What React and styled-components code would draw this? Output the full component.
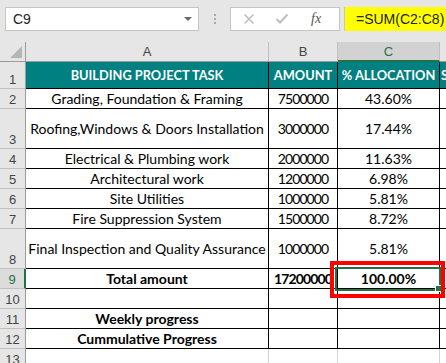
import React from "react";
import styled, { createGlobalStyle } from "styled-components";

const GlobalStyle = createGlobalStyle`
  html, body { margin: 0; padding: 0; background: #ffffff; overflow: hidden; }
  body { font-family: Lato, "Noto Sans", sans-serif; }
`;

const rows = [
  { n: 1, h: 27, head: true, a: "BUILDING PROJECT TASK", b: "AMOUNT", c: "% ALLOCATION", d: "S" },
  { n: 2, h: 20, a: "Grading, Foundation & Framing", b: "7500000", c: "43.60%" },
  { n: 3, h: 40, a: "Roofing,Windows & Doors Installation", b: "3000000", c: "17.44%" },
  { n: 4, h: 20, a: "Electrical & Plumbing work", b: "2000000", c: "11.63%" },
  { n: 5, h: 20, a: "Architectural work", b: "1200000", c: "6.98%" },
  { n: 6, h: 20, a: "Site Utilities", b: "1000000", c: "5.81%" },
  { n: 7, h: 20, a: "Fire Suppression System", b: "1500000", c: "8.72%" },
  { n: 8, h: 40, a: "Final Inspection and Quality Assurance", b: "1000000", c: "5.81%" },
  { n: 9, h: 20, bold: true, a: "Total amount", b: "17200000", c: "100.00%", selected: true },
  { n: 10, h: 20, a: "", b: "", c: "" },
  { n: 11, h: 20, bold: true, a: "Weekly progress", b: "", c: "" },
  { n: 12, h: 20, bold: true, a: "Cummulative Progress", b: "", c: "" },
];

const Page = styled.div`
  width: 446px;
  height: 363px;
  overflow: hidden;
  background: #e6e6e6;
`;

const FormulaBar = styled.div`
  height: 42px;
  display: flex;
  align-items: flex-start;
  padding-top: 7px;
  box-sizing: border-box;
`;

const NameBox = styled.div`
  margin-left: 5px;
  width: 194px;
  height: 24px;
  box-sizing: border-box;
  background: #fff;
  border: 1px solid #c6c6c6;
  display: flex;
  align-items: center;
  justify-content: space-between;
  padding: 0 6px 0 7px;
  font-family: "Liberation Sans", Arial, sans-serif;
  font-size: 14px;
  color: #222;
`;

const Caret = styled.span`
  width: 0;
  height: 0;
  border-left: 4px solid transparent;
  border-right: 4px solid transparent;
  border-top: 4px solid #6a6a6a;
`;

const Dots = styled.div`
  width: 31px;
  height: 24px;
  display: flex;
  flex-direction: column;
  align-items: center;
  justify-content: center;
  gap: 2px;
  & > span { width: 2px; height: 2px; background: #a8a8a8; }
`;

const IconBox = styled.div`
  width: 110px;
  height: 24px;
  box-sizing: border-box;
  background: #fff;
  border: 1px solid #c6c6c6;
  display: flex;
  align-items: center;
  padding-left: 12px;
  gap: 20px;
`;

const Fx = styled.span`
  font-family: "Liberation Serif", serif;
  font-style: italic;
  font-size: 14px;
  color: #555;
  margin-left: 2px;
`;

const FormulaInput = styled.div`
  margin-left: 4px;
  flex: 1;
  height: 24px;
  box-sizing: border-box;
  background: #ffff00;
  border-left: 1px solid #c6c6c6;
  display: flex;
  align-items: center;
  padding-left: 11px;
  font-family: "Liberation Sans", Arial, sans-serif;
  font-size: 14px;
  color: #222;
`;

const Sheet = styled.div`
  display: grid;
  grid-template-columns: 26px 243px 69px 102px 1fr;
  background: #fff;
`;

const ColHead = styled.div`
  height: 20px;
  box-sizing: border-box;
  background: ${(p) => (p.$active ? "#d2d2d2" : "#e6e6e6")};
  border-right: 1px solid ${(p) => (p.$corner ? "#9b9b9b" : "#c0c0c0")};
  border-bottom: ${(p) => (p.$active ? "2px solid #217346" : "1px solid #9b9b9b")};
  display: flex;
  align-items: center;
  justify-content: center;
  font-family: "Liberation Sans", Arial, sans-serif;
  font-size: 13px;
  color: ${(p) => (p.$active ? "#217346" : "#444")};
  position: relative;
`;

const Triangle = styled.span`
  position: absolute;
  right: 3px;
  bottom: 3px;
  width: 0;
  height: 0;
  border-left: 12px solid transparent;
  border-bottom: 12px solid #b5b5b5;
`;

const RowHead = styled.div`
  height: ${(p) => p.$h}px;
  box-sizing: border-box;
  background: ${(p) => (p.$active ? "#dcdcdc" : "#e6e6e6")};
  border-right: ${(p) => (p.$active ? "2px solid #217346" : "1px solid #9b9b9b")};
  border-bottom: 1px solid #c0c0c0;
  display: flex;
  align-items: flex-end;
  justify-content: center;
  padding-bottom: 1px;
  font-family: "Liberation Sans", Arial, sans-serif;
  font-size: 13px;
  color: ${(p) => (p.$active ? "#217346" : "#444")};
`;

const Cell = styled.div`
  height: ${(p) => p.$h}px;
  box-sizing: border-box;
  background: ${(p) => (p.$head ? "#008080" : "#fff")};
  color: ${(p) => (p.$head ? "#fff" : "#000")};
  border-right: 1px solid ${(p) => (p.$light ? "#d4d4d4" : "#000")};
  border-bottom: 1px solid ${(p) => (p.$light ? "#d4d4d4" : "#000")};
  display: flex;
  align-items: center;
  justify-content: ${(p) => (p.$left ? "flex-start" : "center")};
  padding-left: ${(p) => (p.$left ? "1px" : "0")};
  font-size: ${(p) => (p.$head ? "12.8px" : "14px")};
  font-weight: ${(p) => (p.$bold ? 700 : 400)};
  letter-spacing: ${(p) => (p.$num && !p.$head ? "-0.9px" : "0")};
  white-space: nowrap;
  position: relative;
`;

const Selection = styled.span`
  position: absolute;
  z-index: 2;
  left: -3px;
  top: -2px;
  width: 106px;
  height: 24px;
  box-sizing: border-box;
  border: 2px solid #217346;
  pointer-events: none;
`;

const FillHandle = styled.span`
  position: absolute;
  right: -3px;
  bottom: -3px;
  width: 5px;
  height: 5px;
  background: #217346;
  border: 1px solid #fff;
`;

const Highlight = styled.span`
  position: absolute;
  z-index: 3;
  left: -8px;
  top: -8px;
  width: 115px;
  height: 37px;
  box-sizing: border-box;
  border: 4px solid #ff0000;
  pointer-events: none;
`;

const Cross = () => (
  <svg width="12" height="12" viewBox="0 0 12 12">
    <path d="M1.5 1.5 L10.5 10.5 M10.5 1.5 L1.5 10.5" stroke="#bdbdbd" strokeWidth="1.5" fill="none" />
  </svg>
);

const Check = () => (
  <svg width="14" height="12" viewBox="0 0 14 12">
    <path d="M1.5 6 L5 9.5 L12.5 1.5" stroke="#bdbdbd" strokeWidth="2" fill="none" />
  </svg>
);

const App = () => (
  <Page>
    <GlobalStyle />
    <FormulaBar>
      <NameBox>
        C9
        <Caret />
      </NameBox>
      <Dots>
        <span />
        <span />
        <span />
      </Dots>
      <IconBox>
        <Cross />
        <Check />
        <Fx>fx</Fx>
      </IconBox>
      <FormulaInput>=SUM(C2:C8)</FormulaInput>
    </FormulaBar>
    <Sheet>
      <ColHead $corner>
        <Triangle />
      </ColHead>
      <ColHead>A</ColHead>
      <ColHead>B</ColHead>
      <ColHead $active>C</ColHead>
      <ColHead />

      {rows.map((r) => (
        <React.Fragment key={r.n}>
          <RowHead $h={r.h} $active={r.selected}>{r.n}</RowHead>
          <Cell $h={r.h} $head={r.head} $bold={r.head || r.bold}>{r.a}</Cell>
          <Cell $h={r.h} $head={r.head} $bold={r.head || r.bold} $num>{r.b}</Cell>
          <Cell $h={r.h} $head={r.head} $bold={r.head || r.bold}>
            {r.c}
            {r.selected && (
              <>
                <Selection>
                  <FillHandle />
                </Selection>
                <Highlight />
              </>
            )}
          </Cell>
          <Cell $h={r.h} $head={r.head} $bold={r.head} $left>{r.d || ""}</Cell>
        </React.Fragment>
      ))}

      <RowHead $h={20}>13</RowHead>
      <Cell $h={20} $light />
      <Cell $h={20} $light />
      <Cell $h={20} $light />
      <Cell $h={20} $light />
    </Sheet>
  </Page>
);

export default App;
